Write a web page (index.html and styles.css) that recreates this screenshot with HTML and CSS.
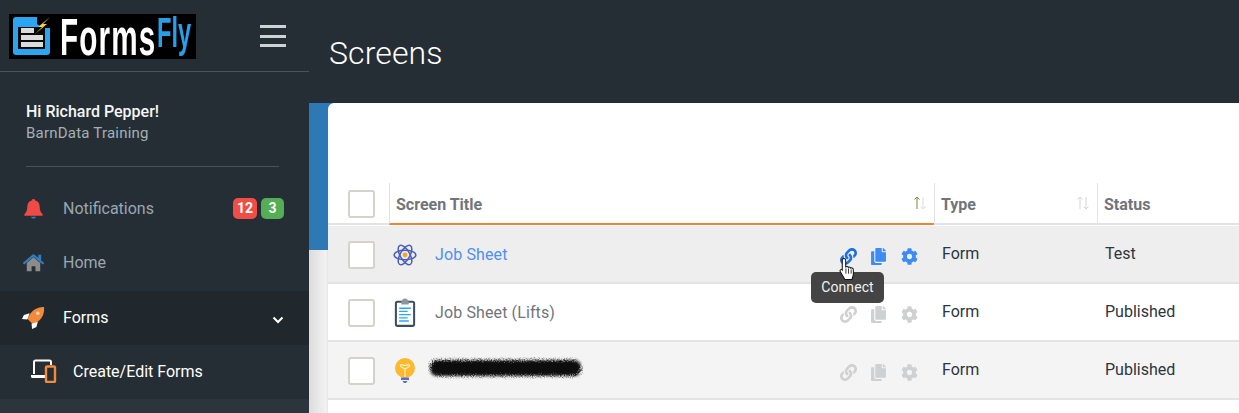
FILE: index.html
```html
<!DOCTYPE html>
<html lang="en">
<head>
<meta charset="utf-8">
<title>Screens</title>
<link rel="stylesheet" href="styles.css">
</head>
<body>
<div class="app">
  <aside class="sidebar">
    <div class="brand">
      <div class="logo">
        <svg class="logo-icon" viewBox="0 0 44 45" width="44" height="45">
          <path fill="#2aa5f2" d="M4 6a3 3 0 0 1 3-3h21v7l6 4h7v24a3 3 0 0 1-3 3H7a3 3 0 0 1-3-3z"/>
          <rect x="9" y="13" width="27" height="22" fill="#0a0a0a"/>
          <path fill="#dcdcdc" d="M12 14h13v5H12zM12 21h22v5H12zM12 28h22v5H12z"/>
          <path fill="#f6d33c" d="M41 3 29 13h4l-7 7 12-10h-4z"/>
        </svg>
        <span class="logo-forms">Forms</span><span class="logo-fly">Fly</span>
      </div>
      <button class="burger" aria-label="Menu"><i></i><i></i><i></i></button>
    </div>
    <div class="user">
      <div class="user-name">Hi Richard Pepper!</div>
      <div class="user-org">BarnData Training</div>
    </div>
    <nav class="nav">
      <a class="nav-item">
        <svg class="nav-icon" viewBox="0 0 24 24"><path fill="#ef4a45" d="M12 2c1 0 1.700.7 1.800 1.700C17 4.500 18.500 7 18.500 10.500c0 4 1 5.500 3 7.500v1.500h-19V18c2-2 3-3.500 3-7.500C5.500 7 7 4.500 10.200 3.700 10.300 2.700 11 2 12 2z"/><path fill="#2f80c2" d="M9.500 20.500h5a2.500 2 0 0 1-5 0z"/></svg>
        <span class="nav-label">Notifications</span>
        <span class="badge badge-red">12</span><span class="badge badge-green">3</span>
      </a>
      <a class="nav-item">
        <svg class="nav-icon" viewBox="0 0 24 24"><path fill="#8c8c8c" d="M5 12.500 12 6.500l7 6V21h-5v-5h-4v5H5z"/><path fill="#2f80c2" d="M12 3 .8 12.500l1.500 1.700L12 6l9.700 8.200 1.500-1.700L20 9.800V4h-3v3.200z"/></svg>
        <span class="nav-label">Home</span>
      </a>
      <a class="nav-item nav-open">
        <svg class="nav-icon" viewBox="0 0 24 24"><path fill="#f28a3c" d="M23 1c.6 6-1.500 11.500-6 15l-5.500 3.500L5.500 13l3.500-5.500C12.500 3 17.500.6 23 1z"/><path fill="#fff" d="M8 7.500 2 9.500 0 13.500l5.500.5zM16.500 16.500 15 22l-4.500 2-.5-5.500z"/><circle cx="16.500" cy="7.500" r="1.800" fill="#fbd3b0"/></svg>
        <span class="nav-label">Forms</span>
        <svg class="chev" viewBox="0 0 12 8" width="12" height="8"><path d="M1.500 1.500 6 6l4.500-4.500" fill="none" stroke="#fff" stroke-width="2"/></svg>
      </a>
      <a class="nav-sub">
        <svg class="sub-icon" viewBox="0 0 28 24" width="28" height="24"><path d="M4 15V3a1.500 1.500 0 0 1 1.500-1.500h14A1.500 1.500 0 0 1 21 3v3" fill="none" stroke="#fff" stroke-width="2"/><path d="M1 16h15v3H2.500A1.500 1.500 0 0 1 1 17.500z" fill="#fff"/><rect x="16" y="7.500" width="9" height="15.500" rx="1" fill="none" stroke="#f28a3c" stroke-width="2.400"/></svg>
        <span>Create/Edit Forms</span>
      </a>
      <div class="nav-rest"></div>
    </nav>
  </aside>
  <main class="main">
    <header class="topbar"><h1>Screens</h1></header>
    <div class="body">
      <section class="card">
        <div class="card-space"></div>
        <div class="row head">
          <div class="c-check"><span class="check"></span></div>
          <div class="c-title th th-active"><span>Screen Title</span>
            <svg class="sort" viewBox="0 0 14 16" width="14" height="16"><path d="M4 14V2M1.500 4.500 4 2l2.500 2.500" fill="none" stroke="#7a8a3a" stroke-width="1"/><path d="M10 2v12M7.500 11.500 10 14l2.500-2.500" fill="none" stroke="#ddd" stroke-width="1"/></svg>
          </div>
          <div class="c-type th"><span>Type</span>
            <svg class="sort" viewBox="0 0 14 16" width="14" height="16"><path d="M4 14V2M1.500 4.500 4 2l2.500 2.500M10 2v12M7.500 11.500 10 14l2.500-2.500" fill="none" stroke="#d5d5d5" stroke-width="1"/></svg>
          </div>
          <div class="c-status th"><span>Status</span></div>
        </div>

        <div class="row item hover">
          <div class="c-check"><span class="check"></span></div>
          <div class="c-title cell">
            <svg class="row-icon" viewBox="0 0 24 24"><g fill="none" stroke="#4a5fb8" stroke-width="1.400"><ellipse cx="12" cy="12" rx="10" ry="4.400"/><ellipse cx="12" cy="12" rx="10" ry="4.400" transform="rotate(60 12 12)"/><ellipse cx="12" cy="12" rx="10" ry="4.400" transform="rotate(120 12 12)"/></g><circle cx="12" cy="12" r="2.200" fill="#f5a623"/></svg>
            <span class="name link">Job Sheet</span>
            <span class="actions active">
              <span class="act-wrap">
                <svg class="act" viewBox="0 0 512 512"><use href="#i-link"/></svg>
                <span class="tooltip">Connect</span>
                <svg class="cursor" viewBox="0 0 18 24" width="20" height="25"><path d="M5 1.500c1 0 1.800.8 1.800 1.800V10l.2-.5c1-.6 2-.3 2.300.5.800-.6 2-.3 2.300.7.800-.5 2-.2 2.400.8.300 2 .2 5-.2 7l-1 3H6L1.500 14c-.8-1.300 1-2.700 2-1.500V3.300C3.200 2.300 4 1.500 5 1.500z" fill="#fff" stroke="#111" stroke-width="1"/><path d="M7 11v5M9.500 11v5M12 12v4" stroke="#111" stroke-width=".8"/></svg>
              </span>
              <svg class="act act-copy" viewBox="0 0 448 512"><use href="#i-copy"/></svg>
              <svg class="act act-gear" viewBox="0 0 512 512"><use href="#i-gear"/></svg>
            </span>
          </div>
          <div class="c-type cell">Form</div>
          <div class="c-status cell">Test</div>
        </div>

        <div class="row item">
          <div class="c-check"><span class="check"></span></div>
          <div class="c-title cell">
            <svg class="row-icon row-icon-tall" viewBox="0 0 24 28"><rect x="3.500" y="3.500" width="17" height="22.500" rx="1.500" fill="#fff" stroke="#3d4f5c" stroke-width="1.900"/><path fill="#8a979f" d="M8.500 4c0-1.500 1.700-3.500 3.500-3.500s3.500 2 3.500 3.500v2h-7z"/><path stroke="#2aa5f2" stroke-width="1.300" d="M6.500 9.500h11M6.500 12.500h8M6.500 15.500h11M6.500 18.500h8M6.500 21.500h9"/></svg>
            <span class="name">Job Sheet (Lifts)</span>
            <span class="actions">
              <svg class="act" viewBox="0 0 512 512"><use href="#i-link"/></svg>
              <svg class="act act-copy" viewBox="0 0 448 512"><use href="#i-copy"/></svg>
              <svg class="act act-gear" viewBox="0 0 512 512"><use href="#i-gear"/></svg>
            </span>
          </div>
          <div class="c-type cell">Form</div>
          <div class="c-status cell">Published</div>
        </div>

        <div class="row item striped">
          <div class="c-check"><span class="check"></span></div>
          <div class="c-title cell">
            <svg class="row-icon" viewBox="0 0 24 26"><circle cx="12" cy="10" r="10" fill="#fdb92e"/><path d="M12 19V11M8.500 6.500c-1.500 0-1.500 2 0 2.500L12 11l3.500-2c1.500-.5 1.500-2.500 0-2.500-1 0-1.500 1-3.500 1s-2.500-1-3.500-1z" fill="none" stroke="#fff3c4" stroke-width="1.200"/><path fill="#5c6bc0" d="M8 19.500h8V22H8zM9.500 23h5l-1.500 2h-2z"/></svg>
            <svg class="scribble" viewBox="0 0 156 24" width="156" height="24"><defs><filter id="rough" x="-5%" y="-40%" width="110%" height="180%"><feGaussianBlur in="SourceGraphic" stdDeviation="1.400" result="b"/><feTurbulence type="fractalNoise" baseFrequency="0.9" numOctaves="2" result="n"/><feDisplacementMap in="b" in2="n" scale="5"/></filter></defs><rect x="2" y="4" width="151" height="16" rx="7" fill="#0d0d0d" filter="url(#rough)"/></svg>
            <span class="actions">
              <svg class="act" viewBox="0 0 512 512"><use href="#i-link"/></svg>
              <svg class="act act-copy" viewBox="0 0 448 512"><use href="#i-copy"/></svg>
              <svg class="act act-gear" viewBox="0 0 512 512"><use href="#i-gear"/></svg>
            </span>
          </div>
          <div class="c-type cell">Form</div>
          <div class="c-status cell">Published</div>
        </div>
      </section>
    </div>
  </main>
</div>
<svg class="defs" width="0" height="0" aria-hidden="true">
  <defs>
    <symbol id="i-link" viewBox="0 0 512 512"><path d="M326.600 185.400c59.700 59.800 58.900 155.700.4 214.600l-.4.400-67.200 67.200c-59.300 59.300-155.700 59.300-215 0-59.300-59.300-59.300-155.700 0-215l37.100-37.100c9.800-9.800 26.800-3.300 27.300 10.600.6 17.700 3.800 35.500 9.700 52.700 2 5.800.6 12.300-3.800 16.600l-13.100 13.100c-28 28-28.900 73.700-1.200 102 28 28.600 74.100 28.700 102.300.5l67.200-67.200c28.200-28.200 28.100-73.800 0-101.800-3.700-3.700-7.400-6.600-10.300-8.600-4.300-2.900-7-7.800-7.200-13-.4-10.600 3.400-21.500 11.700-29.800l21.100-21.100c5.500-5.500 14.200-6.200 20.600-1.700 7.300 5.100 14.200 10.900 20.500 17.200zM467.500 44.400c-59.300-59.300-155.700-59.300-215 0l-67.200 67.200-.4.400c-58.600 58.900-59.400 154.800.4 214.600 6.300 6.300 13.200 12.100 20.500 17.200 6.400 4.500 15.100 3.800 20.600-1.700l21.100-21.100c8.300-8.300 12.100-19.200 11.700-29.800-.2-5.200-2.900-10.100-7.200-13-2.900-2-6.600-4.900-10.300-8.600-28.100-28-28.200-73.600 0-101.800l67.200-67.200c28.200-28.200 74.300-28.100 102.300.5 27.700 28.300 26.800 74-1.200 102l-13.100 13.100c-4.400 4.300-5.800 10.800-3.800 16.600 5.900 17.200 9.100 35 9.700 52.700.5 13.900 17.500 20.400 27.300 10.600l37.100-37.100c59.300-59.300 59.300-155.700 0-215z"/></symbol>
    <symbol id="i-copy" viewBox="0 0 448 512"><path d="M320 448v40c0 13.300-10.700 24-24 24H24c-13.300 0-24-10.700-24-24V120c0-13.300 10.700-24 24-24h72v296c0 30.900 25.100 56 56 56zm0-344V0H152c-13.300 0-24 10.700-24 24v368c0 13.300 10.700 24 24 24h272c13.300 0 24-10.700 24-24V128H344c-13.200 0-24-10.800-24-24zm121-31L375 7c-4.500-4.500-10.600-7-17-7h-6v96h96v-6.100c0-6.300-2.500-12.400-7-16.900z"/></symbol>
    <symbol id="i-gear" viewBox="0 0 512 512"><path d="M487.400 315.700l-42.600-24.600c4.300-23.200 4.300-47 0-70.200l42.600-24.600c4.900-2.800 7.100-8.600 5.500-14-11.100-35.600-30-67.800-54.700-94.600-3.800-4.100-10-5.100-14.800-2.300L380.800 110c-17.900-15.400-38.500-27.300-60.800-35.100V25.800c0-5.600-3.900-10.500-9.400-11.700-36.700-8.200-74.300-7.800-109.200 0-5.500 1.200-9.400 6.100-9.400 11.700V75c-22.200 7.900-42.800 19.800-60.800 35.100L88.700 85.500c-4.900-2.800-11-1.900-14.800 2.300-24.700 26.700-43.600 58.900-54.700 94.600-1.700 5.400.6 11.200 5.500 14L67.300 221c-4.300 23.200-4.300 47 0 70.200l-42.600 24.600c-4.900 2.800-7.100 8.600-5.500 14 11.100 35.600 30 67.800 54.700 94.600 3.800 4.100 10 5.100 14.800 2.300l42.600-24.600c17.900 15.400 38.500 27.300 60.800 35.100v49.200c0 5.600 3.900 10.500 9.400 11.700 36.700 8.200 74.300 7.800 109.200 0 5.500-1.200 9.400-6.100 9.400-11.700v-49.200c22.200-7.900 42.800-19.800 60.800-35.100l42.600 24.600c4.900 2.800 11 1.900 14.800-2.300 24.700-26.700 43.600-58.900 54.700-94.600 1.500-5.500-.7-11.300-5.600-14.100zM256 336c-44.100 0-80-35.900-80-80s35.900-80 80-80 80 35.900 80 80-35.900 80-80 80z"/></symbol>
  </defs>
</svg>
</body>
</html>
```
FILE: styles.css
```css
* { box-sizing: border-box; }
html, body { margin: 0; padding: 0; height: 100%; overflow: hidden; }
body { font-family: Roboto, "Liberation Sans", sans-serif; background: #f4f5f6; color: #26313a; }
.app { display: flex; height: 413px; width: 1239px; overflow: hidden; }
.defs { position: absolute; }

.sidebar { width: 309px; flex: none; background: #262e35; color: #fff; display: flex; flex-direction: column; z-index: 2; }
.brand { height: 72px; flex: none; display: flex; align-items: flex-start; justify-content: space-between; padding: 14px 23px 0 9px; border-bottom: 1px solid #4b535a; }
.logo { width: 187px; height: 45px; background: #000; display: flex; align-items: flex-start; }
.logo-icon { flex: none; margin-right: 7px; }
.logo-forms { font-family: "Liberation Sans", sans-serif; font-size: 52px; font-weight: 700; color: #fff; line-height: 52px; margin-top: -3px; letter-spacing: 2px; transform: scaleX(.57); transform-origin: left center; margin-right: -69px; white-space: nowrap; }
.logo-fly { font-family: "Liberation Sans", sans-serif; font-size: 43px; font-weight: 700; color: #24a1ea; line-height: 43px; margin-top: -3px; margin-left: -3px; transform: scaleX(.55); transform-origin: left center; margin-right: -30px; white-space: nowrap; }
.burger { width: 26px; height: 22px; margin-top: 11px; padding: 0; border: 0; background: none; display: flex; flex-direction: column; justify-content: space-between; }
.burger i { display: block; height: 3px; background: #cfd2d3; }

.user { height: 95px; flex: none; margin: 0 30px 0 26px; padding-top: 30px; border-bottom: 1px solid #4b535a; }
.user-name { font-size: 16px; line-height: 20px; font-weight: 500; color: #f4f6f7; }
.user-org { font-size: 15px; line-height: 22px; letter-spacing: .22px; color: #a3b0b9; }

.nav { flex: 1; display: flex; flex-direction: column; padding-top: 14px; }
.nav-item { height: 54px; flex: none; display: flex; align-items: center; padding: 0 25px 0 22px; color: #9aa8b1; font-size: 16px; }
.nav-icon { width: 23px; height: 23px; flex: none; margin-right: 18px; }
.nav-label { flex: 1; }
.nav-open { background: #20272d; color: #fff; margin-top: 2px; padding-bottom: 2px; }
.chev { margin-top: 6px; }
.badge { font-size: 14px; font-weight: 700; color: #fff; height: 21px; line-height: 21px; border-radius: 5px; text-align: center; }
.badge-red { background: #ef4d45; width: 24px; margin-right: 4px; }
.badge-green { background: #54ae55; width: 23px; }
.nav-sub { height: 54px; flex: none; display: flex; align-items: center; padding: 0 0 2px 30px; font-size: 16px; color: #fff; background: #262e35; }
.sub-icon { margin-right: 15px; }
.nav-rest { flex: 1; background: #2d353c; }

.main { flex: 1; min-width: 0; display: flex; flex-direction: column; position: relative; }
.topbar { height: 103px; flex: none; background: #262e35; padding: 32px 0 0 20px; }
.topbar h1 { margin: 0; font-size: 32px; font-weight: 300; line-height: 42px; letter-spacing: .1px; color: #fff; }
.body { flex: 1; padding-left: 19px; background: linear-gradient(#2c79b5, #2c79b5) 0 0 / 100% 147px no-repeat, linear-gradient(90deg, #dcdcdc, #f2f2f2 17px, #e4e4e4 19px); }
.card { background: #fff; border-radius: 6px 0 0 0; height: 100%; }
.card-space { height: 77px; }

.row { display: flex; }
.c-check { width: 61px; flex: none; display: flex; padding-left: 20px; align-items: center; }
.c-title { width: 545px; flex: none; display: flex; align-items: center; position: relative; }
.c-type { width: 163px; flex: none; }
.c-status { flex: 1; }
.check { width: 27px; height: 28px; margin-top: 4px; background: #fff; border: 2px solid #d5d1cc; border-radius: 3px; display: block; }

.head { height: 45px; }
.head .c-check { height: 45px; border-bottom: 2px solid #e0e4e8; }
.th { margin-top: 3px; height: 42px; padding: 2px 7px 0 6px; font-size: 16px; font-weight: 700; color: #70757a; display: flex; align-items: center; justify-content: space-between; border-left: 1px solid #e0e4e8; border-bottom: 2px solid #e0e4e8; }
.th-active { border-bottom-color: #f0833a; }
.sort { margin-top: -3px; }

.item { height: 58px; padding-bottom: 2px; border-bottom: 2px solid #e3e3e3; font-size: 16px; }
.item.hover { background: #eeeeee; margin-top: 1px; }
.item.striped { background: #f4f4f4; }
.cell { display: flex; align-items: center; padding-left: 8px; color: #2d3540; }
.c-title.cell { padding-left: 3px; color: #70757a; }
.row-icon { width: 26px; height: 26px; flex: none; margin-right: 17px; margin-top: 3px; }
.row-icon-tall { height: 30px; margin-top: 3px; }
.name { flex: 1; margin-top: 2px; letter-spacing: .12px; }
.link { color: #4f8ff0; }
.scribble { flex: none; margin-left: -7px; margin-top: -3px; }
.actions { margin-left: auto; display: flex; align-items: center; gap: 14px; padding-right: 16px; color: #ced0d2; margin-top: 6px; }
.actions.active { color: #3d8bf5; }
.act { width: 17px; height: 17px; fill: currentColor; display: block; }
.act-copy { width: 15px; }
.act-gear { margin-left: 1px; }
.act-wrap { position: relative; display: block; width: 17px; height: 17px; color: #1f6fe0; }
.cursor { position: absolute; left: -2px; top: 9px; }
.tooltip { position: absolute; left: -29px; top: 24px; width: 73px; height: 31px; background: #444; color: #f2f2f2; border-radius: 5px; font-size: 14px; line-height: 31px; text-align: center; letter-spacing: .1px; }
```
